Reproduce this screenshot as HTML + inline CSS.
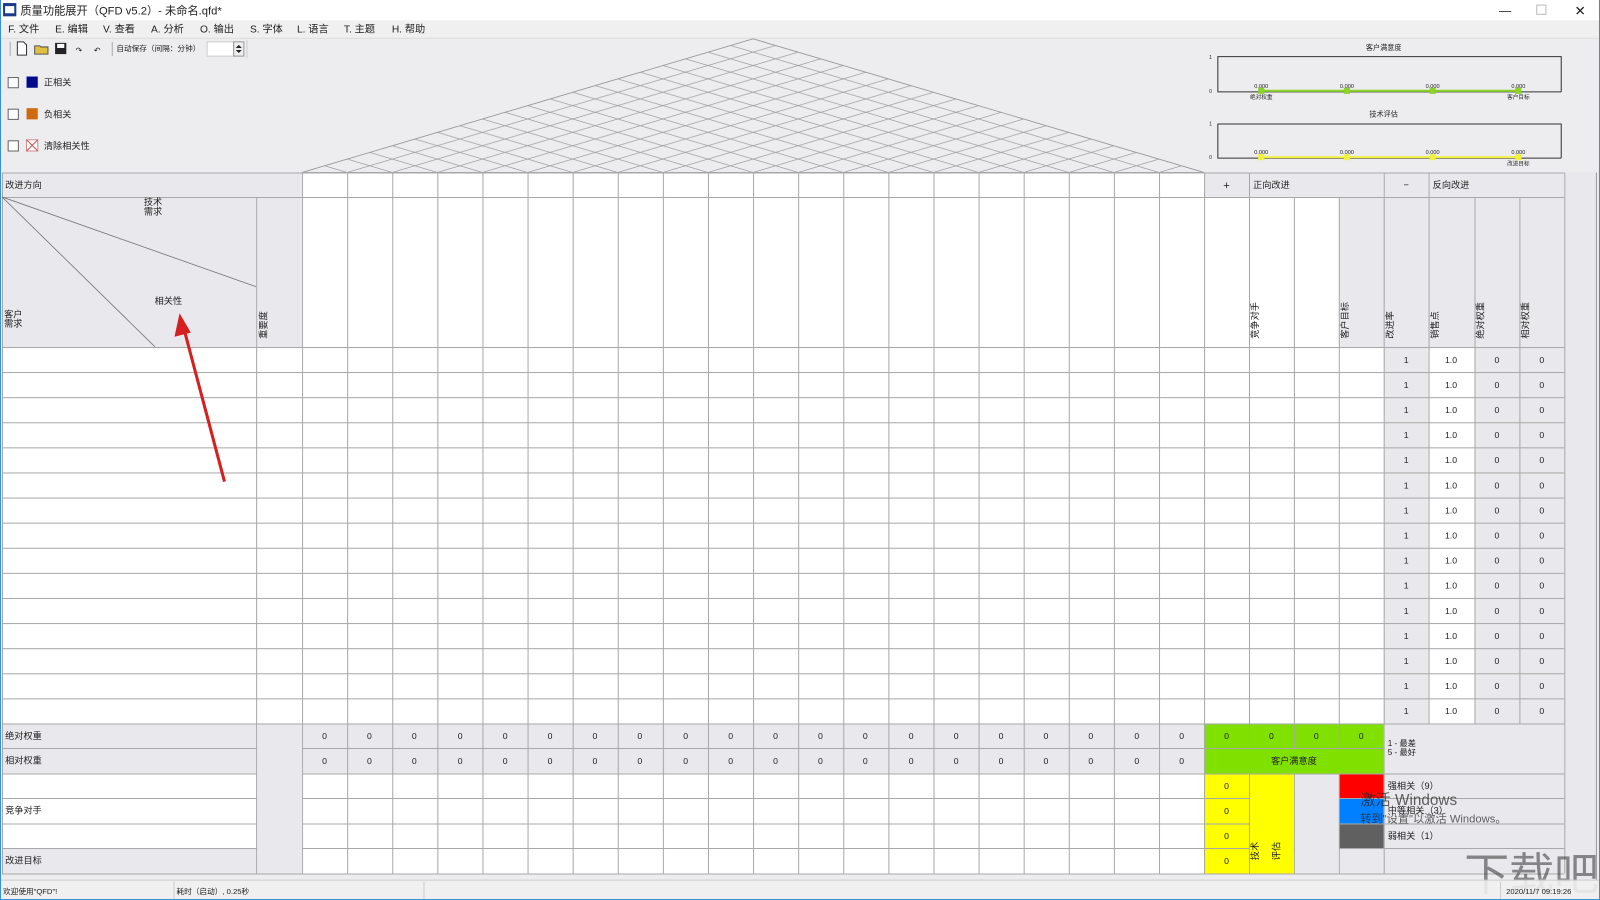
<!DOCTYPE html>
<html><head><meta charset="utf-8"><style>
html,body{margin:0;padding:0;width:1600px;height:900px;overflow:hidden;background:#ededf0}
#w{width:1568px;height:882px;transform:scale(1.020408);transform-origin:0 0}
text{font-family:"Liberation Sans","Noto Sans CJK SC",sans-serif;fill:#222}
</style></head><body><div id="w">
<svg width="1568" height="882" viewBox="0 0 1568 882" xmlns="http://www.w3.org/2000/svg">
<defs>
<pattern id="lat" patternUnits="userSpaceOnUse" x="296" y="169" width="44.2" height="13.1">
<path d="M0 13.1L44.2 0M0 0L44.2 13.1" stroke="#9a9a9a" stroke-width="0.7" fill="none"/></pattern>
<pattern id="vcol" patternUnits="userSpaceOnUse" x="296" y="0" width="44.2" height="10">
<path d="M0.5 0V10" stroke="#a8a8a8" stroke-width="1"/></pattern>
<pattern id="hrow" patternUnits="userSpaceOnUse" x="0" y="340" width="10" height="24.6">
<path d="M0 0.5H10" stroke="#a8a8a8" stroke-width="1"/></pattern>
<clipPath id="tri"><polygon points="296,169 738,38 1180,169"/></clipPath>
</defs>
<rect width="1568" height="882" fill="#ededf0"/>
<rect x="0" y="0" width="1568" height="20" fill="#fff"/>
<rect x="3" y="3" width="13" height="13" fill="#1c3a8c"/><rect x="5" y="6" width="9" height="7" fill="#fff"/>
<text x="20" y="14" font-size="11">质量功能展开（QFD  v5.2）- 未命名.qfd*</text>
<text x="1469" y="14" font-size="12" fill="#333">—</text>
<rect x="1506" y="5" width="9" height="9" fill="none" stroke="#bbb"/>
<text x="1543" y="15" font-size="13" fill="#333">✕</text>
<rect x="0" y="20" width="1568" height="17" fill="#f0f0f0"/>
<g font-size="10">
<text x="8" y="32">F. 文件</text><text x="54" y="32">E. 编辑</text><text x="101" y="32">V. 查看</text><text x="148" y="32">A. 分析</text><text x="196" y="32">O. 输出</text><text x="245" y="32">S. 字体</text><text x="291" y="32">L. 语言</text><text x="337" y="32">T. 主题</text><text x="384" y="32">H. 帮助</text>
</g>
<line x1="0" y1="37.5" x2="1568" y2="37.5" stroke="#ddd"/>
<line x1="10" y1="41" x2="10" y2="55" stroke="#aaa"/>
<path d="M17 41h6l3 3v10h-9z" fill="#fff" stroke="#333"/>
<path d="M34 45h5l1 1h7v7h-13z" fill="#e0c040" stroke="#555"/>
<rect x="54" y="42" width="11" height="11" fill="#222"/><rect x="56" y="43" width="7" height="4" fill="#fff"/>
<text x="74" y="52" font-size="8" fill="#aaa">↷</text><text x="92" y="52" font-size="8" fill="#aaa">↶</text>
<line x1="110" y1="41" x2="110" y2="55" stroke="#aaa"/>
<text x="114" y="50" font-size="7.5">自动保存（间隔：分钟）</text>
<rect x="203" y="41" width="26" height="14" fill="#fff" stroke="#ccc"/>
<rect x="229" y="41" width="10" height="14" fill="#eee" stroke="#999"/>
<path d="M231 47l3-3 3 3zM231 49l3 3 3-3z" fill="#222"/>
<line x1="242" y1="39" x2="242" y2="57" stroke="#ccc"/>
<g font-size="9">
<rect x="8" y="76" width="10" height="10" fill="#fff" stroke="#666"/><rect x="26" y="75" width="11" height="11" fill="#000a8a"/><text x="43" y="84">正相关</text>
<rect x="8" y="107" width="10" height="10" fill="#fff" stroke="#666"/><rect x="26" y="106" width="11" height="11" fill="#d06a10"/><text x="43" y="115">负相关</text>
<rect x="8" y="138" width="10" height="10" fill="#fff" stroke="#666"/><rect x="26" y="137" width="11" height="11" fill="#fff" stroke="#d09090"/><path d="M26 137l11 11M37 137l-11 11" stroke="#d05050"/><text x="43" y="146">清除相关性</text>
</g>
<rect x="296" y="38" width="884" height="131" fill="url(#lat)" clip-path="url(#tri)"/>
<polygon points="296,169 738,38 1180,169" fill="none" stroke="#9a9a9a" stroke-width="0.8"/>
<g font-size="6.5">
<text x="1356" y="49" font-size="7" text-anchor="middle">客户满意度</text>
<path d="M1193 55.5H1530V90M1193.5 55V90H1530" fill="none" stroke="#333"/>
<text x="1185" y="58" font-size="5">1</text><text x="1185" y="91" font-size="5">0</text>
<line x1="1236" y1="89" x2="1488" y2="89" stroke="#8bd22a" stroke-width="2"/>
<g fill="#8bd22a"><rect x="1233" y="86" width="6" height="6"/><rect x="1317" y="86" width="6" height="6"/><rect x="1401" y="86" width="6" height="6"/><rect x="1485" y="86" width="6" height="6"/></g>
<text x="1236" y="86" text-anchor="middle" font-size="5.5" fill="#555">0.000</text><text x="1320" y="86" text-anchor="middle" font-size="5.5" fill="#555">0.000</text><text x="1404" y="86" text-anchor="middle" font-size="5.5" fill="#555">0.000</text><text x="1488" y="86" text-anchor="middle" font-size="5.5" fill="#555">0.000</text>
<text x="1236" y="97" text-anchor="middle" font-size="5.5">绝对权重</text><text x="1488" y="97" text-anchor="middle" font-size="5.5">客户目标</text>
<text x="1356" y="114" font-size="7" text-anchor="middle">技术评估</text>
<path d="M1193 121.5H1530V155M1193.5 121V155H1530" fill="none" stroke="#333"/>
<text x="1185" y="123" font-size="5">1</text><text x="1185" y="156" font-size="5">0</text>
<line x1="1236" y1="154" x2="1488" y2="154" stroke="#f0f040" stroke-width="2"/>
<g fill="#f0f040"><rect x="1233" y="151" width="6" height="6"/><rect x="1317" y="151" width="6" height="6"/><rect x="1401" y="151" width="6" height="6"/><rect x="1485" y="151" width="6" height="6"/></g>
<text x="1236" y="151" text-anchor="middle" font-size="5.5" fill="#555">0.000</text><text x="1320" y="151" text-anchor="middle" font-size="5.5" fill="#555">0.000</text><text x="1404" y="151" text-anchor="middle" font-size="5.5" fill="#555">0.000</text><text x="1488" y="151" text-anchor="middle" font-size="5.5" fill="#555">0.000</text>
<text x="1488" y="162" text-anchor="middle" font-size="5.5">改进目标</text>
</g>
<rect x="2" y="169" width="1531" height="687" fill="#fff"/>
<g fill="#e9e8ec">
<rect x="2" y="169" width="294" height="171"/>
<rect x="1180" y="169" width="353" height="24"/>
<rect x="1312" y="193" width="221" height="147"/>
<rect x="1356" y="340" width="44" height="369"/>
<rect x="1445" y="340" width="88" height="369"/>
<rect x="2" y="709" width="1178" height="49"/>
<rect x="251" y="709" width="45" height="147"/>
<rect x="2" y="831.5" width="249" height="24.5"/>
<rect x="1356" y="709" width="177" height="147"/>
<rect x="1268" y="758" width="44" height="98"/>
<rect x="1312" y="831.5" width="44" height="24.5"/>
<rect x="1533" y="169" width="31" height="693"/>
</g>
<rect x="1180" y="709" width="176" height="49" fill="#80e000"/>
<rect x="1180" y="758" width="88" height="98" fill="#ffff00"/>
<rect x="1312" y="758" width="44" height="24.5" fill="#ff0000"/>
<rect x="1312" y="782.5" width="44" height="24.5" fill="#0080ff"/>
<rect x="1312" y="807" width="44" height="24.5" fill="#606060"/>
<rect x="296" y="169" width="884" height="687" fill="url(#vcol)"/>
<rect x="2" y="340" width="1531" height="369" fill="url(#hrow)"/>
<g stroke="#a8a8a8" stroke-width="1">
<path d="M2.5 169V856M251.5 193V856M1180.5 169V856M1224.5 169V856M1268.5 193V856M1312.5 193V856M1356.5 169V856M1400.5 169V709M1445.5 193V709M1489.5 193V709M1533.5 169V856"/>
<path d="M2 169.5H1533M2 193.5H1533M2 340.5H1533M2 709.5H1533M2 733.5H1533M2 758.5H1533M2 782.5H1533M2 807.5H1533M2 831.5H1533M2 856.5H1533"/>
</g>
<rect x="3" y="170" width="292.5" height="23" fill="#e9e8ec"/>
<rect x="3" y="194" width="248" height="146" fill="#e9e8ec"/>
<rect x="1225" y="170" width="131" height="23" fill="#e9e8ec"/>
<rect x="1401" y="170" width="132" height="23" fill="#e9e8ec"/>
<rect x="252" y="710" width="44" height="146" fill="#e9e8ec"/>
<rect x="1181" y="734" width="175" height="24" fill="#80e000"/>
<rect x="1357" y="710" width="176" height="48" fill="#e9e8ec"/>
<rect x="1225" y="759" width="43" height="97" fill="#ffff00"/>
<rect x="1269" y="759" width="43" height="97" fill="#e9e8ec"/>
<line x1="1564.5" y1="169" x2="1564.5" y2="862" stroke="#999"/>
<path d="M2 193L251 281M2 193L152 340" stroke="#777" stroke-width="0.8"/>
<g font-size="9">
<text x="150" y="201" text-anchor="middle">技术</text><text x="150" y="210" text-anchor="middle">需求</text>
<text x="165" y="298" text-anchor="middle">相关性</text>
<text x="4" y="311">客户</text><text x="4" y="320">需求</text>
<text transform="translate(261,332) rotate(-90)">重要度</text>
<text transform="translate(1233,332) rotate(-90)">竞争对手</text>
<text transform="translate(1321,332) rotate(-90)">客户目标</text>
<text transform="translate(1365,332) rotate(-90)">改进率</text>
<text transform="translate(1409,332) rotate(-90)">销售点</text>
<text transform="translate(1454,332) rotate(-90)">绝对权重</text>
<text transform="translate(1498,332) rotate(-90)">相对权重</text>
<text x="5" y="184">改进方向</text>
<text x="1202" y="185" text-anchor="middle" font-size="11" fill="#e070b0">+</text>
<text x="1228" y="184">正向改进</text>
<text x="1378" y="184" text-anchor="middle" fill="#e070b0">−</text>
<text x="1404" y="184">反向改进</text>
<text x="5" y="724">绝对权重</text><text x="5" y="748">相对权重</text><text x="5" y="797">竞争对手</text><text x="5" y="846">改进目标</text>
<text x="1268" y="748.5" text-anchor="middle">客户满意度</text>
<text x="1360" y="731" font-size="8">1 - 最差</text><text x="1360" y="740" font-size="8">5 - 最好</text>
<text x="1360" y="773">强相关（9）</text><text x="1360" y="797">中等相关（3）</text><text x="1360" y="822">弱相关（1）</text>
<text transform="translate(1233,843) rotate(-90)">技术</text><text transform="translate(1254,843) rotate(-90)">评估</text>
</g>
<g font-size="8.5" text-anchor="middle" fill="#333">
<text x="318 362 406 451 495 539 583 627 672 716 760 804 848 893 937 981 1025 1069 1114 1158" y="724">00000000000000000000</text>
<text x="318 362 406 451 495 539 583 627 672 716 760 804 848 893 937 981 1025 1069 1114 1158" y="748.5">00000000000000000000</text>
<text x="1202 1246 1290 1334" y="724">0000</text>
<text x="1202 1202 1202 1202" y="773 797.5 822 846.5">0000</text>
<text x="1378 1378 1378 1378 1378 1378 1378 1378 1378 1378 1378 1378 1378 1378 1378" y="355.5 380.1 404.7 429.3 453.9 478.5 503.1 527.7 552.3 576.9 601.5 626.1 650.7 675.3 699.9">111111111111111</text>
<text x="1467 1467 1467 1467 1467 1467 1467 1467 1467 1467 1467 1467 1467 1467 1467" y="355.5 380.1 404.7 429.3 453.9 478.5 503.1 527.7 552.3 576.9 601.5 626.1 650.7 675.3 699.9">000000000000000</text>
<text x="1511 1511 1511 1511 1511 1511 1511 1511 1511 1511 1511 1511 1511 1511 1511" y="355.5 380.1 404.7 429.3 453.9 478.5 503.1 527.7 552.3 576.9 601.5 626.1 650.7 675.3 699.9">000000000000000</text>
</g>
<g font-size="8.5" text-anchor="middle" fill="#333">
<text x="1422" y="355.5">1.0</text><text x="1422" y="380.1">1.0</text><text x="1422" y="404.7">1.0</text><text x="1422" y="429.3">1.0</text><text x="1422" y="453.9">1.0</text><text x="1422" y="478.5">1.0</text><text x="1422" y="503.1">1.0</text><text x="1422" y="527.7">1.0</text><text x="1422" y="552.3">1.0</text><text x="1422" y="576.9">1.0</text><text x="1422" y="601.5">1.0</text><text x="1422" y="626.1">1.0</text><text x="1422" y="650.7">1.0</text><text x="1422" y="675.3">1.0</text><text x="1422" y="699.9">1.0</text>
</g>
<line x1="220" y1="472" x2="181" y2="325" stroke="#d42020" stroke-width="3"/>
<polygon points="176,307 171,330 187,326" fill="#d42020"/>
<text x="1333" y="789" font-size="15" fill="#d4d4d8" opacity="0.7">激活 Windows</text>
<text x="1333" y="806" font-size="11" fill="#d4d4d8" opacity="0.7">转到"设置"以激活 Windows。</text>
<text x="1435" y="872" font-size="44" fill="#d0d0d4" opacity="0.5">下载吧</text>
<rect x="0" y="863" width="1568" height="19" fill="#efeff1" opacity="0.9"/>
<line x1="0" y1="862.5" x2="1568" y2="862.5" stroke="#ccc"/>
<path d="M170.5 864V882M415.5 864V882M1470.5 864V882" stroke="#ccc"/>
<g font-size="7.5"><text x="3" y="876">欢迎使用"QFD"!</text><text x="173" y="876">耗时（启动）, 0.25秒</text><text x="1476" y="876">2020/11/7  09:19:26</text></g>
<path d="M0.5 0V882M1567.5 0V882M0 881.5H1568" stroke="#3b8fd8" fill="none"/>
</svg>
</div></body></html>
